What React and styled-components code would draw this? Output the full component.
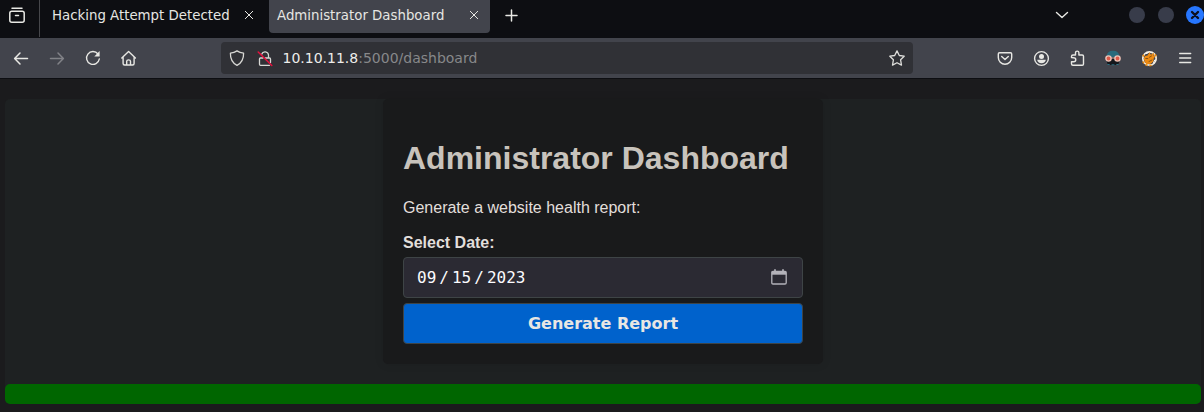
import React from "react";
import styled, { createGlobalStyle } from "styled-components";

const Global = createGlobalStyle`
  * { box-sizing: border-box; }
  html, body { margin: 0; background: #1b1b1d; overflow: hidden; }
`;

const Window = styled.div`
  width: 1204px;
  height: 412px;
  display: flex;
  flex-direction: column;
  background: #1b1b1d;
  font-family: "DejaVu Sans", sans-serif;
  overflow: hidden;
`;

const TabStrip = styled.header`
  height: 38px;
  flex: none;
  display: flex;
  align-items: flex-start;
  background: #0d0e12;
`;

const RecentButton = styled.div`
  width: 40px;
  height: 37px;
  padding: 7px 0 0 9px;
  border-right: 1px solid #46474b;
`;

const Tab = styled.div`
  width: ${(p) => p.$width}px;
  height: 33px;
  padding: 0 ${(p) => p.$right}px 3px ${(p) => p.$left}px;
  display: flex;
  align-items: center;
  justify-content: space-between;
  border-radius: 0 0 4px 4px;
  background: ${(p) => (p.$active ? "#42444c" : "transparent")};
`;

const TabTitle = styled.span`
  padding-top: 2px;
  font-size: 13.33px;
  line-height: 18px;
  white-space: nowrap;
  color: #e6e6e2;
`;

const StripActions = styled.div`
  flex: 1;
  height: 30px;
  padding-left: 14px;
  display: flex;
  align-items: center;
  justify-content: space-between;
`;

const WindowControls = styled.div`
  display: flex;
  align-items: center;
`;

const WindowDots = styled.div`
  display: flex;
  gap: 11px;
  margin-left: 58px;
`;

const Icon = styled.svg`
  display: block;
  flex: none;
  width: ${(p) => p.$size || 16}px;
  height: ${(p) => p.$size || 16}px;
  overflow: visible;
  fill: none;
  stroke: ${(p) => p.$color || "#e8e8e4"};
  stroke-width: ${(p) => p.$weight || 1.3};
  stroke-linecap: round;
  stroke-linejoin: round;
`;

const Toolbar = styled.nav`
  height: 41px;
  flex: none;
  padding: 0 11px 1px 13px;
  display: flex;
  align-items: center;
  justify-content: space-between;
  background: #42444c;
  border-bottom: 1px solid #0d0e12;
`;

const IconGroup = styled.div`
  display: flex;
  gap: 20px;
`;

const AddressBar = styled.div`
  width: 692px;
  height: 32px;
  padding: 0 8px;
  display: flex;
  align-items: center;
  border-radius: 4px;
  background: #303136;
`;

const Security = styled.div`
  display: flex;
  gap: 12px;
`;

const Url = styled.div`
  flex: 1;
  padding-left: 9.5px;
  font-size: 14px;
  line-height: 18px;
  color: #87888a;
`;

const Host = styled.span`
  color: #ededea;
`;

const Page = styled.main`
  flex: 1;
  padding: 20px 3px 0 5px;
  font-family: "Liberation Sans", Arial, sans-serif;
`;

const Container = styled.div`
  height: 305px;
  display: flex;
  flex-direction: column;
  justify-content: space-between;
  align-items: center;
  border-radius: 5px;
  background: #1e2122;
`;

const Card = styled.section`
  width: 440px;
  height: 265px;
  padding: 20px;
  border-radius: 5px;
  background: #191a1b;
  box-shadow: 0 0 10px rgba(0, 0, 0, 0.1);
`;

const Title = styled.h1`
  margin: 21px 0 0;
  font-size: 32px;
  line-height: 37px;
  white-space: nowrap;
  color: #c8c3bc;
`;

const Intro = styled.p`
  margin: 22px 0 0;
  font-size: 16px;
  line-height: 18px;
  color: #e2dfdb;
`;

const Label = styled.label`
  display: block;
  margin: 17px 0 5px;
  font-size: 16px;
  line-height: 18px;
  font-weight: bold;
  color: #e2dfdb;
`;

const DateField = styled.div`
  height: 41px;
  padding: 0 15px 0 13px;
  display: flex;
  align-items: center;
  justify-content: space-between;
  border: 1px solid #3e4446;
  border-radius: 4px;
  background: #2b2a33;
`;

const DateValue = styled.div`
  display: flex;
  font-family: "DejaVu Sans Mono", monospace;
  font-size: 16px;
  line-height: 20px;
  color: #fbfbfe;
`;

const Slash = styled.span`
  width: 15.7px;
  text-align: center;
`;

const SubmitButton = styled.button`
  display: block;
  width: 100%;
  height: 41px;
  margin: 5px 0 0;
  padding: 0;
  border: 1px solid #3e4446;
  border-radius: 4px;
  background: #0062cc;
  color: #e8e6e3;
  font: bold 16px/20px "DejaVu Sans", sans-serif;
`;

const StatusBar = styled.footer`
  width: 100%;
  height: 20px;
  border-radius: 5px;
  background: #006600;
`;

const CloseIcon = () => (
  <Icon $size={10} $weight={1} viewBox="0 0 10 10">
    <path d="M1.3 1.3 8.7 8.7M8.7 1.3 1.3 8.7" />
  </Icon>
);

const Dot = ({ close }) => (
  <Icon $size={18} viewBox="0 0 18 18">
    <circle cx="9" cy="9" r={close ? 9 : 8} fill={close ? "#2777ff" : "#383c4a"} stroke="none" />
    {close && <path d="M6 6l6 6M12 6l-6 6" stroke="#0c1020" strokeWidth="2.4" />}
  </Icon>
);

const SpyIcon = () => (
  <Icon viewBox="0 0 16 16">
    <path d="M1.5 6.500Q2 .8 8 .8t6.500 5.700L12 7H4z" fill="#286b7c" stroke="none" />
    <path d="M2 7h12v5.500l-1 2.500H3l-1-2.500z" fill="#14171c" stroke="none" />
    <path d="M6 8h4" stroke="#efc4b7" strokeWidth="1.200" />
    <circle cx="3.500" cy="8.500" r="2.600" fill="#dc5b49" stroke="#efc4b7" strokeWidth="1.400" />
    <circle cx="12.500" cy="8.500" r="2.600" fill="#dc5b49" stroke="#efc4b7" strokeWidth="1.400" />
    <path d="M2.800 14.500h1.500M7 14.800h2M11.700 14.500h1.500" stroke="#2c7182" strokeWidth="1" />
  </Icon>
);

const FoxIcon = () => (
  <Icon viewBox="0 0 16 16">
    <circle cx="8.500" cy="8.500" r="6.700" stroke="#f4eee2" strokeWidth="1.700" />
    <path d="M1.800 11.500A7 7 0 0 0 11 15M14 4.300a7 7 0 0 1 1.300 4M1.800 6.500 3.200 4" stroke="#e98b12" strokeWidth="1.700" strokeDasharray="2.200 1.800" strokeLinecap="butt" />
    <path d="M2.700 8.500 4 6 6.500 5.500 8.500 2.200l1.300 2.500 3.300-2-.5 3 2 .8-1.800 1.500-.5 3.500-2.500 2.300-4 .4-2-2.300z" fill="#ed8b13" stroke="none" />
    <path d="M4.800 8.500h2M8.500 7.200l2-1.200M8 11.500l3-1.500" stroke="#8a5310" strokeWidth="1" />
    <path d="M5.500 3.500 7 2.800M12.500 12.500l1.200-2.500" stroke="#fff" strokeWidth="1" />
  </Icon>
);

export default function App() {
  return (
    <Window>
      <Global />
      <TabStrip>
        <RecentButton>
          <Icon $weight={1.5} viewBox="0 0 16 16">
            <path d="M3 1.200h10M2.800 4.300h10.400q2 0 2 2v6.900q0 2-2 2H2.800q-2 0-2-2V6.300q0-2 2-2zM6.500 8.500h3" />
          </Icon>
        </RecentButton>
        <Tab $width={229} $left={12} $right={15}>
          <TabTitle>Hacking Attempt Detected</TabTitle>
          <CloseIcon />
        </Tab>
        <Tab $active $width={221} $left={8} $right={11}>
          <TabTitle>Administrator Dashboard</TabTitle>
          <CloseIcon />
        </Tab>
        <StripActions>
          <Icon viewBox="0 0 16 16" $weight={1.5}>
            <path d="M7.500 3v11M2 8.500h11" />
          </Icon>
          <WindowControls>
            <Icon viewBox="0 0 16 16" $weight={1.4}>
              <path d="M2.500 5.500 8 10.500l5.500-5" />
            </Icon>
            <WindowDots>
              <Dot />
              <Dot />
              <Dot close />
            </WindowDots>
          </WindowControls>
        </StripActions>
      </TabStrip>
      <Toolbar>
        <IconGroup>
          <Icon viewBox="0 0 16 16" $weight={1.5}>
            <path d="M14.500 8.500H2M7 3 1.600 8.500 7 14" />
          </Icon>
          <Icon viewBox="0 0 16 16" $weight={1.5} $color="#818287">
            <path d="M1.500 8.500H14M9 3l5.400 5.500L9 14" />
          </Icon>
          <Icon viewBox="0 0 16 16" $weight={1.4}>
            <path d="M13 4A6.400 6.400 0 1 0 14.300 9" />
            <path d="M14.600 1v5.500H9.300z" fill="#e8e8e4" stroke="none" />
          </Icon>
          <Icon viewBox="0 0 16 16" $weight={1.4}>
            <path d="M.8 8 7.600 1.500 14.400 8M2.100 7v6.500q0 1.500 1.500 1.500h8q1.500 0 1.500-1.500V7M5.700 15v-3.800q0-1.300 1.900-1.300t1.900 1.300V15" />
          </Icon>
        </IconGroup>
        <AddressBar>
          <Security>
            <Icon viewBox="0 0 16 16" $color="#d8d8d5">
              <path d="M8 .9Q10.700 2.800 14.600 3.200 14.800 11.800 8 15.300 1.200 11.800 1.400 3.200 5.300 2.800 8 .9z" />
            </Icon>
            <Icon viewBox="0 0 16 16" $color="#d8d8d5">
              <path d="M4.700 4.200a3.500 3.500 0 0 1 6.800.8v3M8.500 8H12.500q1 0 1 1v3.500M12.500 15.300H3.500q-1 0-1-1V9q0-1 1-1H6" />
              <path d="M1.200 2 14.800 15.500" stroke="#e6103e" strokeWidth="1.500" />
            </Icon>
          </Security>
          <Url><Host>10.10.11.8</Host>:5000/dashboard</Url>
          <Icon viewBox="0 0 16 16" $color="#dededb">
            <path d="m8 .9 2.300 4.600 4.900.7-3.600 3.600.9 5.300L8 12.700l-4.500 2.400.9-5.300L.8 6.200l4.900-.7z" />
          </Icon>
        </AddressBar>
        <IconGroup>
          <Icon viewBox="0 0 16 16" $weight={1.4}>
            <path d="M2.500 2.700h11q1.200 0 1.200 1.200v3.700a6.700 6.700 0 0 1-13.400 0V3.900q0-1.200 1.200-1.200zM4.700 6.400 8 9.500l3.300-3.100" />
          </Icon>
          <Icon viewBox="0 0 16 16" $weight={1.4}>
            <circle cx="8.500" cy="8.500" r="6.900" />
            <circle cx="8.500" cy="6.400" r="2.500" fill="#e8e8e4" stroke="none" />
            <path d="M4.200 9.800h8.600q-.5 3.400-4.300 3.400T4.200 9.800z" fill="#e8e8e4" stroke="none" />
          </Icon>
          <Icon viewBox="0 0 16 16" $weight={1.4}>
            <path d="M2.500 7.500V6.500q0-1.500 1.500-1.500h2.500V2.800a1.700 1.700 0 0 1 3.400 0V5h3.300q1.300 0 1.300 1.300v7.600q0 1.300-1.300 1.300H4q-1.500 0-1.500-1.500v-1.900h2.200a2 2 0 0 0 0-4.100z" />
          </Icon>
          <SpyIcon />
          <FoxIcon />
          <Icon viewBox="0 0 16 16" $weight={1.4}>
            <path d="M2.700 3.500h11M2.700 8h11M2.700 12.500h11" />
          </Icon>
        </IconGroup>
      </Toolbar>
      <Page>
        <Container>
          <Card>
            <Title>Administrator Dashboard</Title>
            <Intro>Generate a website health report:</Intro>
            <Label>Select Date:</Label>
            <DateField>
              <DateValue>
                09<Slash>/</Slash>15<Slash>/</Slash>2023
              </DateValue>
              <Icon viewBox="0 0 16 16" $color="#b4b3ba">
                <path d="M.8 1.500h14.400v3.200H.8z" fill="#b4b3ba" stroke="none" />
                <path d="M4-.8v2M12-.8v2" strokeWidth="1.700" strokeLinecap="butt" />
                <path d="M2 1.500h12q1.200 0 1.200 1.200v10.100q0 1.200-1.200 1.200H2q-1.200 0-1.200-1.200V2.700q0-1.200 1.200-1.200z" />
              </Icon>
            </DateField>
            <SubmitButton>Generate Report</SubmitButton>
          </Card>
          <StatusBar />
        </Container>
      </Page>
    </Window>
  );
}
